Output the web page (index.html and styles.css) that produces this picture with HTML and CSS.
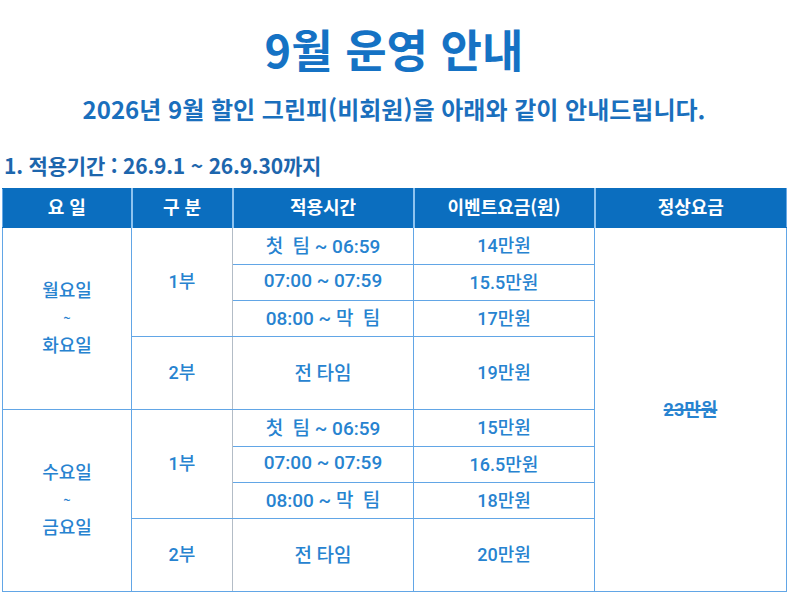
FILE: index.html
```html
<!DOCTYPE html>
<html lang="ko">
<head>
<meta charset="utf-8">
<title>9월 운영 안내</title>
<link rel="stylesheet" href="styles.css">
</head>
<body>
<main class="page">
  <h1 class="title">9월 운영 안내</h1>
  <p class="subtitle">2026년 9월 할인 그린피(비회원)을 아래와 같이 안내드립니다.</p>
  <h2 class="section">1. 적용기간 : 26.9.1 ~ 26.9.30까지</h2>
  <table class="fees">
    <colgroup>
      <col class="c-day"><col class="c-part"><col class="c-time"><col class="c-event"><col class="c-normal">
    </colgroup>
    <thead>
      <tr><th>요 일</th><th>구 분</th><th>적용시간</th><th>이벤트요금(원)</th><th>정상요금</th></tr>
    </thead>
    <tbody>
      <tr class="r1">
        <td rowspan="4" class="day">월요일<br><span class="tilde">~</span><br>화요일</td>
        <td rowspan="3" class="part">1부</td>
        <td class="time">첫&nbsp;&nbsp;팀 ~ 06:59</td>
        <td>14만원</td>
        <td rowspan="8" class="normal"><s>23만원</s></td>
      </tr>
      <tr class="r2"><td class="time">07:00 ~ 07:59</td><td>15.5만원</td></tr>
      <tr class="r3"><td class="time">08:00 ~ 막&nbsp;&nbsp;팀</td><td>17만원</td></tr>
      <tr class="r4"><td class="part">2부</td><td class="time">전 타임</td><td>19만원</td></tr>
      <tr class="r1">
        <td rowspan="4" class="day">수요일<br><span class="tilde">~</span><br>금요일</td>
        <td rowspan="3" class="part">1부</td>
        <td class="time">첫&nbsp;&nbsp;팀 ~ 06:59</td>
        <td>15만원</td>
      </tr>
      <tr class="r2"><td class="time">07:00 ~ 07:59</td><td>16.5만원</td></tr>
      <tr class="r3"><td class="time">08:00 ~ 막&nbsp;&nbsp;팀</td><td>18만원</td></tr>
      <tr class="r4"><td class="part">2부</td><td class="time">전 타임</td><td>20만원</td></tr>
    </tbody>
  </table>
</main>
</body>
</html>
```

FILE: styles.css
```css
html, body {
  margin: 0;
  padding: 0;
  background: #ffffff;
}

.page {
  display: flex;
  flex-direction: column;
  padding-top: 24px;
  font-family: "Noto Sans CJK KR", "Noto Sans", sans-serif;
}

.title {
  margin: 0;
  text-align: center;
  font-size: 45px;
  line-height: 50px;
  font-weight: 700;
  color: #1572c4;
  letter-spacing: 0;
}

.subtitle {
  margin: 20px 0 0;
  text-align: center;
  font-size: 24px;
  line-height: 30px;
  font-weight: 700;
  color: #1a6fbd;
  letter-spacing: 0;
}

.section {
  margin: 28px 0 0 4px;
  font-size: 21px;
  line-height: 26px;
  font-weight: 700;
  color: #1d66ad;
  letter-spacing: -0.2px;
}

.fees {
  margin: 10px 0 0 2px;
  width: 784px;
  table-layout: fixed;
  border-collapse: collapse;
  font-family: "Roboto", "Noto Sans CJK KR", sans-serif;
}

.c-day { width: 129px; }
.c-part { width: 101px; }
.c-time { width: 181px; }
.c-event { width: 181px; }
.c-normal { width: 192px; }

.fees th {
  height: 34px;
  padding: 0 0 4px;
  background: #0b6ebf;
  color: #ffffff;
  font-family: "Noto Sans CJK KR", sans-serif;
  font-size: 18px;
  font-weight: 700;
  border: 1px solid #0b6ebf;
  border-left: 2px solid #8ec3ef;
  border-right: 2px solid #8ec3ef;
}

.fees th:first-child { border-left: 1px solid #6aaae6; }
.fees th:last-child { border-right: 1px solid #6aaae6; }

.fees td {
  padding: 0 0 4px;
  text-align: center;
  color: #2783d0;
  font-size: 18px;
  font-weight: 500;
  border: 1px solid #62a6e6;
}

.fees td.time {
  font-size: 19px;
}

.fees tr.r1 td { height: 32px; }
.fees tr.r2 td { height: 31px; }
.fees tr.r3 td { height: 31px; }
.fees tr.r4 td { height: 68px; }

.fees td.day {
  font-family: "Noto Sans CJK KR", sans-serif;
  font-size: 18px;
  line-height: 26px;
}

.fees td.day .tilde {
  font-size: 13px;
}

.fees td.part {
  border-left-color: #b3bcc6;
  border-right-color: #b3bcc6;
}

.fees td.normal s {
  font-weight: 700;
  text-decoration-thickness: 1.5px;
}
```
